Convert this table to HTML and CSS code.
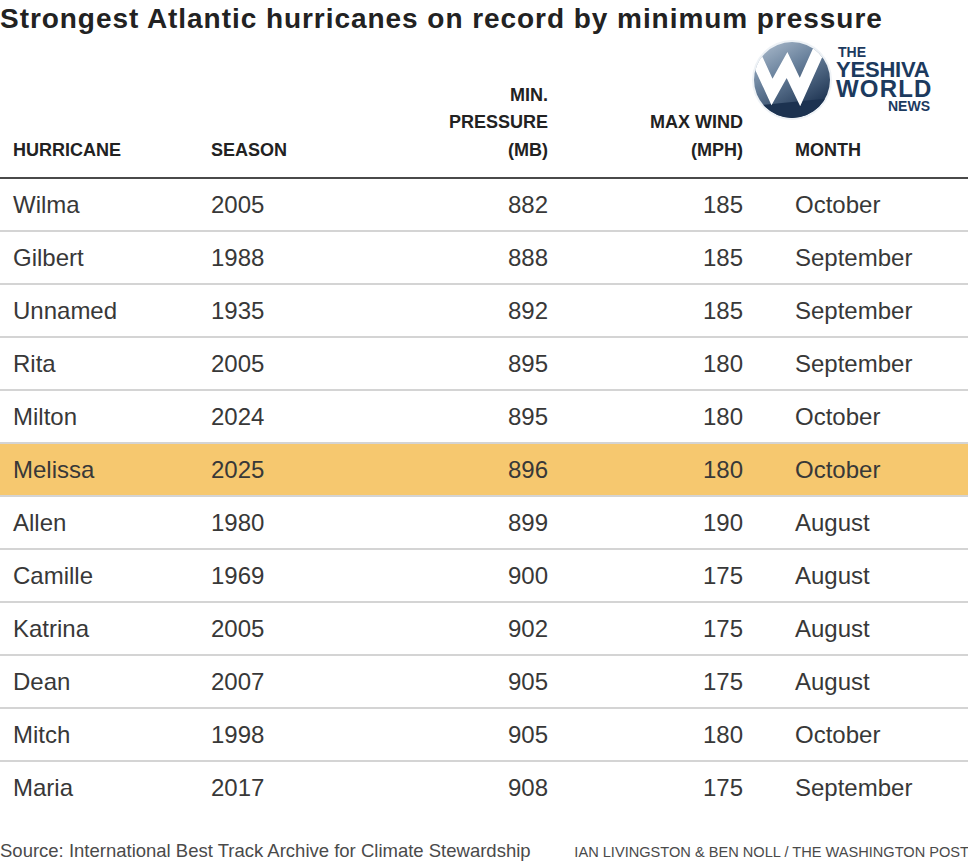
FILE: index.html
```html
<!DOCTYPE html>
<html lang="en">
<head>
<meta charset="utf-8">
<title>Strongest Atlantic hurricanes on record by minimum pressure</title>
<link rel="stylesheet" href="styles.css">
</head>
<body>
<div class="page">
  <h1 class="title">Strongest Atlantic hurricanes on record by minimum pressure</h1>

  <div class="logo">
    <svg class="logo-mark" width="80" height="80" viewBox="0 0 80 80">
      <defs>
        <linearGradient id="lg" x1="0" y1="0" x2="0.6" y2="1">
          <stop offset="0" stop-color="#b3c2d2"/>
          <stop offset="0.45" stop-color="#6a829d"/>
          <stop offset="1" stop-color="#1c3250"/>
        </linearGradient>
        <clipPath id="cc"><circle cx="40" cy="40" r="38"/></clipPath>
      </defs>
      <circle cx="40" cy="40" r="40" fill="#eef2f6"/>
      <circle cx="40" cy="40" r="38" fill="url(#lg)"/>
      <g clip-path="url(#cc)">
        <polygon points="0,66 80,58 80,80 0,80" fill="#1c3250"/>
        <polyline points="3,15 20,52 35,25 48,52 70,3" fill="none" stroke="#ffffff" stroke-width="12" stroke-linejoin="miter" stroke-miterlimit="6"/>
      </g>
    </svg>
    <div class="logo-text">
      <span class="lt-the">THE</span>
      <span class="lt-big">YESHIVA</span>
      <span class="lt-big lt-world">WORLD</span>
      <span class="lt-news">NEWS</span>
    </div>
  </div>

  <div class="table">
    <div class="row head">
      <div class="cell c-name">HURRICANE</div>
      <div class="cell c-season">SEASON</div>
      <div class="cell c-num">MIN.<br>PRESSURE<br>(MB)</div>
      <div class="cell c-num">MAX WIND<br>(MPH)</div>
      <div class="cell c-month">MONTH</div>
    </div>

    <div class="row"><div class="cell c-name">Wilma</div><div class="cell c-season">2005</div><div class="cell c-num">882</div><div class="cell c-num">185</div><div class="cell c-month">October</div></div>
    <div class="row"><div class="cell c-name">Gilbert</div><div class="cell c-season">1988</div><div class="cell c-num">888</div><div class="cell c-num">185</div><div class="cell c-month">September</div></div>
    <div class="row"><div class="cell c-name">Unnamed</div><div class="cell c-season">1935</div><div class="cell c-num">892</div><div class="cell c-num">185</div><div class="cell c-month">September</div></div>
    <div class="row"><div class="cell c-name">Rita</div><div class="cell c-season">2005</div><div class="cell c-num">895</div><div class="cell c-num">180</div><div class="cell c-month">September</div></div>
    <div class="row"><div class="cell c-name">Milton</div><div class="cell c-season">2024</div><div class="cell c-num">895</div><div class="cell c-num">180</div><div class="cell c-month">October</div></div>
    <div class="row hl"><div class="cell c-name">Melissa</div><div class="cell c-season">2025</div><div class="cell c-num">896</div><div class="cell c-num">180</div><div class="cell c-month">October</div></div>
    <div class="row"><div class="cell c-name">Allen</div><div class="cell c-season">1980</div><div class="cell c-num">899</div><div class="cell c-num">190</div><div class="cell c-month">August</div></div>
    <div class="row"><div class="cell c-name">Camille</div><div class="cell c-season">1969</div><div class="cell c-num">900</div><div class="cell c-num">175</div><div class="cell c-month">August</div></div>
    <div class="row"><div class="cell c-name">Katrina</div><div class="cell c-season">2005</div><div class="cell c-num">902</div><div class="cell c-num">175</div><div class="cell c-month">August</div></div>
    <div class="row"><div class="cell c-name">Dean</div><div class="cell c-season">2007</div><div class="cell c-num">905</div><div class="cell c-num">175</div><div class="cell c-month">August</div></div>
    <div class="row"><div class="cell c-name">Mitch</div><div class="cell c-season">1998</div><div class="cell c-num">905</div><div class="cell c-num">180</div><div class="cell c-month">October</div></div>
    <div class="row last"><div class="cell c-name">Maria</div><div class="cell c-season">2017</div><div class="cell c-num">908</div><div class="cell c-num">175</div><div class="cell c-month">September</div></div>
  </div>

  <div class="footer">
    <span class="source">Source: International Best Track Archive for Climate Stewardship</span>
    <span class="credit">IAN LIVINGSTON &amp; BEN NOLL / THE WASHINGTON POST</span>
  </div>
</div>
</body>
</html>
```

FILE: styles.css
```css
html, body {
  margin: 0;
  padding: 0;
  background: #ffffff;
}

body {
  font-family: "Liberation Sans", Arial, sans-serif;
  color: #333333;
}

.page {
  position: relative;
  width: 968px;
  height: 865px;
  overflow: hidden;
}

.title {
  margin: 0;
  padding-top: 2px;
  font-size: 28px;
  line-height: 34px;
  font-weight: bold;
  color: #222222;
  letter-spacing: 0.95px;
  white-space: nowrap;
}

/* logo overlay */
.logo {
  position: absolute;
  left: 752px;
  top: 40px;
  display: flex;
  align-items: flex-start;
  gap: 4px;
}

.logo-mark {
  display: block;
}

.logo-text {
  display: flex;
  flex-direction: column;
  align-items: flex-start;
  color: #1c3a5e;
  font-weight: bold;
  padding-top: 5px;
  width: 94px;
}

.lt-the {
  font-size: 14px;
  line-height: 15px;
  padding-left: 2px;
}

.lt-big {
  font-size: 22px;
  line-height: 19px;
  letter-spacing: -0.2px;
}

.lt-world {
  font-size: 24px;
  letter-spacing: 1.2px;
  line-height: 20px;
}

.lt-news {
  align-self: flex-end;
  font-size: 14px;
  line-height: 14px;
}

/* table */
.table {
  display: flex;
  flex-direction: column;
  margin-top: 39px;
}

.row {
  display: grid;
  grid-template-columns: 211px 237px 100px 195px 1fr;
  align-items: center;
  height: 51px;
  border-bottom: 2px solid #d4d4d4;
  font-size: 24px;
  color: #383838;
}

.row.head {
  align-items: end;
  border-bottom: 2px solid #4a4a4a;
  font-size: 18px;
  line-height: 27.5px;
  font-weight: bold;
  color: #222222;
  padding-bottom: 13px;
  box-sizing: border-box;
  height: 104px;
}

.row.hl {
  background: #f6c86f;
}

.row.last {
  border-bottom-color: transparent;
}

.cell {
  white-space: nowrap;
}

.c-name {
  padding-left: 13px;
}

.c-num {
  text-align: right;
}

.c-month {
  padding-left: 52px;
}

/* footer */
.footer {
  display: flex;
  justify-content: space-between;
  align-items: baseline;
  margin-top: 25px;
  color: #4a4a4a;
}

.source {
  font-size: 18.5px;
}

.credit {
  font-size: 14.6px;
  margin-right: -1px;
}
```
